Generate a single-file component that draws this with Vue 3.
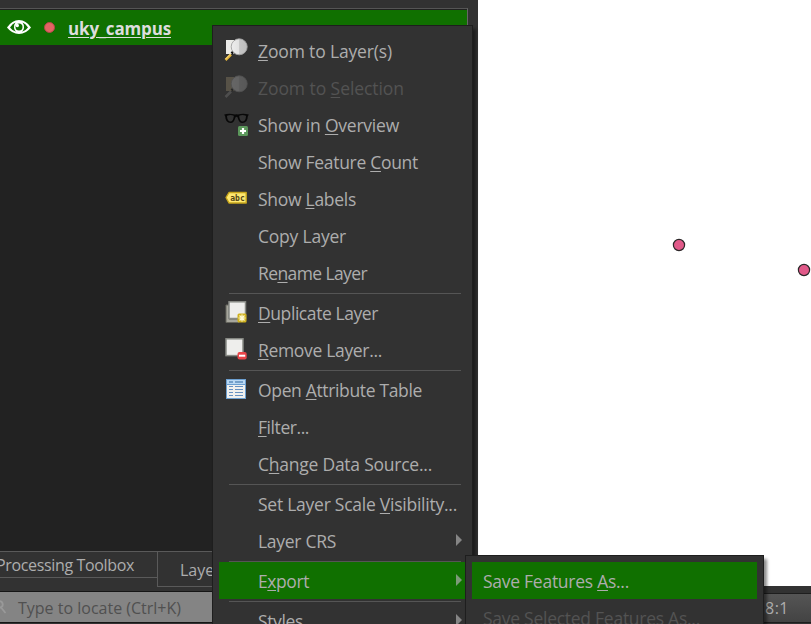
<script setup>
const layerMenu = [
  { pre: '', key: 'Z', post: 'oom to Layer(s)', width: 134, icon: 'zoom' },
  { pre: 'Zoom to ', key: 'S', post: 'election', width: 146, icon: 'zoom', disabled: true },
  { pre: 'Show in ', key: 'O', post: 'verview', width: 141, icon: 'glasses' },
  { pre: 'Show Feature ', key: 'C', post: 'ount', width: 160 },
  { pre: 'Show ', key: 'L', post: 'abels', width: 98, icon: 'label' },
  { pre: 'Copy Layer', width: 88 },
  { pre: 'Re', key: 'n', post: 'ame Layer', width: 109 },
  { separator: true },
  { pre: '', key: 'D', post: 'uplicate Layer', width: 120, icon: 'duplicate' },
  { pre: '', key: 'R', post: 'emove Layer...', width: 124, icon: 'remove' },
  { separator: true },
  { pre: 'Open ', key: 'A', post: 'ttribute Table', width: 164, icon: 'table' },
  { pre: '', key: 'F', post: 'ilter...', width: 51 },
  { pre: 'C', key: 'h', post: 'ange Data Source...', width: 174 },
  { separator: true },
  { pre: 'Set Layer Scale ', key: 'V', post: 'isibility...', width: 199 },
  { pre: 'Layer CRS', width: 78, submenu: true },
  { separator: true },
  { pre: 'E', key: 'x', post: 'port', width: 51, submenu: true, active: true },
  { separator: true },
  { pre: 'Styles', width: 45, submenu: true },
]
const exportMenu = [
  { pre: 'Save Features ', key: 'A', post: 's...', width: 146, active: true },
  { pre: 'Save Selected Features As...', width: 217, disabled: true },
]
const points = [{ x: 679, y: 245 }, { x: 804, y: 270 }]

// Spreads the tracking so that a label takes up its designed width.
const vFit = {
  mounted(el, { value }) {
    const natural = el.getBoundingClientRect().width
    el.style.letterSpacing = `${(value - natural) / el.textContent.length}px`
  },
}
</script>

<template>
  <div class="window">
    <div class="workspace">
      <aside class="dock">
        <div class="tree">
          <div class="layer">
            <svg class="eye" width="26" height="18" viewBox="0 0 26 18">
              <path d="M1 9.500Q6 2 13 2T25 9.500Q20 16 13 16T1 9.500Z" fill="#fff" />
              <path d="M4 9.500Q6.500 5.500 9.500 4.500Q7.500 7 8 10Q8.500 12.500 10 13.800Q6 12.500 4 9.500ZM22 9.500Q19.500 5.500 16.500 4.500Q18.500 7 18 10Q17.500 12.500 16 13.800Q20 12.500 22 9.500Z" fill="#107000" />
              <circle cx="13" cy="9" r="3.500" fill="#107000" />
              <circle cx="11.300" cy="7.500" r="1.700" fill="#fff" />
            </svg>
            <i class="symbol"></i>
            <span v-fit="103" class="layer-name">uky_campus</span>
          </div>
        </div>
        <div class="tabs">
          <div class="tab first"><span v-fit="138">Processing Toolbox</span></div>
          <div class="tab second"><span>Layer Styling</span></div>
        </div>
      </aside>
      <main class="map">
        <svg width="333" height="586" viewBox="478 0 333 586">
          <circle v-for="p in points" :key="p.x" :cx="p.x" :cy="p.y" r="5.600" fill="#e15989" stroke="#2b2628" stroke-width="1.200" />
        </svg>
      </main>
    </div>
    <footer class="status">
      <div class="locator">
        <svg width="8" height="20" viewBox="0 0 8 20"><path d="M0 4Q3.500 5 2.500 9L0 11M1.500 11L5.500 16" fill="none" stroke="#999" stroke-width="1.800" /></svg>
        <span v-fit="163">Type to locate (Ctrl+K)</span>
      </div>
      <div class="scale"><span v-fit="24">8:1</span></div>
    </footer>

    <nav v-for="(menu, m) in [layerMenu, exportMenu]" :key="m" :class="['menu', m ? 'export-menu' : 'layer-menu']">
      <template v-for="(item, i) in menu" :key="i">
        <div v-if="item.separator" class="separator"></div>
        <div v-else :class="['item', { active: item.active, disabled: item.disabled }]">
          <span v-if="!m" class="icon">
            <svg v-if="item.icon === 'zoom'" width="24" height="26" viewBox="0 0 24 26" :class="{ faded: item.disabled }">
              <defs>
                <linearGradient id="lens"><stop offset="0" stop-color="#ededed" /><stop offset=".5" stop-color="#e2e2e2" /><stop offset=".52" stop-color="#c6c6c6" /><stop offset="1" stop-color="#bdbdbd" /></linearGradient>
              </defs>
              <path d="M2 3H10V17H2Z" :fill="item.disabled ? '#b8a77e' : '#ebebe8'" />
              <path d="M7.500 16.500L10 14" stroke="#111" stroke-width="2.500" />
              <path d="M1.500 23L7 17.500" :stroke="item.disabled ? '#999' : '#e8b83d'" stroke-width="2.500" />
              <path v-if="!item.disabled" d="M1.500 22L6.500 17" stroke="#ffe89a" stroke-width=".8" />
              <circle cx="15.200" cy="9.800" r="8" fill="url(#lens)" stroke="#a1a1a1" stroke-width=".9" />
            </svg>
            <svg v-else-if="item.icon === 'glasses'" width="25" height="26" viewBox="0 0 25 26">
              <path d="M.2 3.500Q5 1.800 11 3.500Q12.500 3 14 3.500Q19 1.800 24.800 3.500L23.800 5.500Q23.500 12 18.500 12Q15 12 13.600 6.500Q12.500 5 11.400 6.500Q10 12 6.500 12Q1.500 12 1.200 5.500Z" fill="#080808" />
              <path d="M3 5.500Q3 4 6.500 4Q10 4 9.800 5.500Q9 10.500 6.500 10.500Q3.500 10.500 3 5.500ZM22 5.500Q22 4 18.500 4Q15 4 15.200 5.500Q16 10.500 18.500 10.500Q21.500 10.500 22 5.500Z" fill="#333" />
              <rect x="14" y="15" width="10" height="10" rx="1.500" fill="#5b975b" />
              <path d="M19 17V23M16 20H22" stroke="#fff" stroke-width="2.200" />
            </svg>
            <svg v-else-if="item.icon === 'label'" width="24" height="26" viewBox="0 0 24 26">
              <path d="M2 12.500L5 7.500H22.200V18H5Z" fill="#ffe970" stroke="#c8a61b" stroke-width="1.400" stroke-linejoin="round" />
              <text x="6.300" y="15.700" class="abc">abc</text>
            </svg>
            <svg v-else-if="item.icon === 'duplicate'" width="24" height="26" viewBox="0 0 24 26">
              <path d="M2 6H5V20H15V23.500H2Z" fill="#a6a69d" stroke="#66665e" />
              <rect x="5" y="2.800" width="16.500" height="16.700" fill="#eeeeec" stroke="#888a85" stroke-width="1.500" />
              <rect x="13.500" y="14.500" width="9" height="9" rx="1.500" fill="#cfb11d" />
              <path d="M18 15.500V22.500M14.500 19H21.500M15.500 16.500L20.500 21.500M20.500 16.500L15.500 21.500" stroke="#fffbd6" stroke-width="1.200" />
            </svg>
            <svg v-else-if="item.icon === 'remove'" width="24" height="26" viewBox="0 0 24 26">
              <rect x="2" y="2.800" width="17" height="16.800" fill="#eeeeec" stroke="#888a85" stroke-width="1.500" />
              <rect x="13.500" y="16" width="9.200" height="7.500" rx="2" fill="#e84448" />
              <path d="M15 19.700H21.200" stroke="#fff" stroke-width="2" />
            </svg>
            <svg v-else-if="item.icon === 'table'" width="24" height="26" viewBox="0 0 24 26">
              <rect x="2.500" y="3.500" width="19" height="19" fill="#f0f0ee" stroke="#6c9fd0" />
              <path d="M3 4H21V8H3Z" fill="#b9d8f3" />
              <path d="M3 8.500H21" stroke="#6c9fd0" />
              <path d="M5 6H9M11 6H19" stroke="#5e8dbd" stroke-width="1.600" />
              <path d="M5 10.500H9M11 10.500H19M5 13.500H9M11 13.500H19M5 16.500H9M11 16.500H19M5 19.500H9M11 19.500H19" stroke="#6691c2" stroke-width="1.100" />
            </svg>
          </span>
          <span v-fit="item.width" class="label">{{ item.pre }}<u v-if="item.key">{{ item.key }}</u>{{ item.post }}</span>
          <i v-if="item.submenu" class="arrow"></i>
        </div>
      </template>
    </nav>
  </div>
</template>

<style>
body {
  overflow: hidden;
}
</style>

<style scoped>
.window {
  box-sizing: border-box;
  position: relative;
  display: flex;
  flex-direction: column;
  width: 811px;
  height: 624px;
  overflow: hidden;
  background: #323232;
  color: #adadad;
  font: 17.500px/24px "Open Sans", "Noto Sans", sans-serif;
}
.window span {
  white-space: pre;
}
.workspace {
  display: flex;
  height: 586px;
}
.dock {
  display: flex;
  flex-direction: column;
  width: 478px;
  padding-top: 8px;
  box-sizing: border-box;
}
.tree {
  box-sizing: border-box;
  width: 468px;
  height: 543px;
  padding-top: 1px;
  border-top: 1px solid #555;
  border-right: 1px solid #666;
  background: #222;
}
.layer {
  display: flex;
  align-items: center;
  height: 35px;
  background: #107000;
}
.eye {
  margin: 0 0 1px 6px;
}
.symbol {
  box-sizing: border-box;
  width: 11px;
  height: 11px;
  margin: 0 13px 1px 12px;
  border: 1px solid #b34848;
  border-radius: 50%;
  background: #e36464;
}
.layer-name {
  padding-top: 2px;
  color: #ddd;
  font-weight: 700;
  font-size: 17px;
  text-decoration: underline;
  text-decoration-thickness: 1px;
  text-underline-offset: 2px;
}
.tabs {
  display: flex;
  align-items: flex-start;
  height: 35px;
  font-size: 16px;
}
.tab {
  box-sizing: border-box;
  border: 1px solid #5a5a5a;
}
.first {
  width: 157px;
  height: 27px;
  border-width: 1px 0;
}
.first span {
  display: inline-block;
  margin-left: -4px;
  line-height: 26px;
}
.second {
  width: 200px;
  height: 36px;
  padding: 6px 0 0 22px;
}
.map {
  flex: 1;
  background: #fff;
}
.map svg {
  display: block;
}
.status {
  display: flex;
  justify-content: space-between;
  height: 38px;
}
.locator {
  box-sizing: border-box;
  display: flex;
  align-items: center;
  width: 400px;
  height: 32px;
  margin-top: 5px;
  border: 1px solid #151515;
  border-width: 1px 0;
  background: #848484;
  color: #505050;
  font-size: 16px;
}
.locator span {
  margin: 2px 0 0 10px;
}
.scale {
  box-sizing: border-box;
  width: 60px;
  height: 30px;
  margin-top: 7px;
  padding: 2px 0 0 14px;
  border: 1px solid #1e1e1e;
  border-width: 1px 0;
  background: linear-gradient(#555, #434343);
  font-size: 16px;
}
.menu {
  position: absolute;
  box-sizing: border-box;
  padding: 6px;
  border: 1px solid #1e1e1e;
  background: #323232;
  box-shadow: 3px 4px 3px rgba(0, 0, 0, .45);
}
.layer-menu {
  left: 212px;
  top: 25px;
  width: 261px;
  height: 640px;
}
.export-menu {
  left: 465px;
  top: 555px;
  width: 299px;
  height: 110px;
}
.item {
  display: flex;
  align-items: center;
  height: 37px;
}
.active {
  background: #107000;
}
.disabled {
  color: #535353;
}
.icon {
  width: 34px;
  height: 26px;
  margin: -2px 0 0 5px;
}
.icon svg {
  display: block;
}
.faded {
  opacity: .28;
}
.abc {
  fill: #514414;
  font: bold 8px "DejaVu Sans Mono", monospace;
}
.export-menu .label {
  margin-left: 11px;
}
.label u {
  text-decoration-thickness: 1px;
  text-underline-offset: 2px;
}
.arrow {
  margin: 0 4px 1px auto;
  border: 6px solid transparent;
  border-right-width: 0;
  border-left-color: #858585;
}
.active .arrow {
  border-left-color: #7d9a78;
}
.separator {
  height: 2px;
  margin: 0 5px 0 10px;
  border-bottom: 1px solid #555;
}
</style>
